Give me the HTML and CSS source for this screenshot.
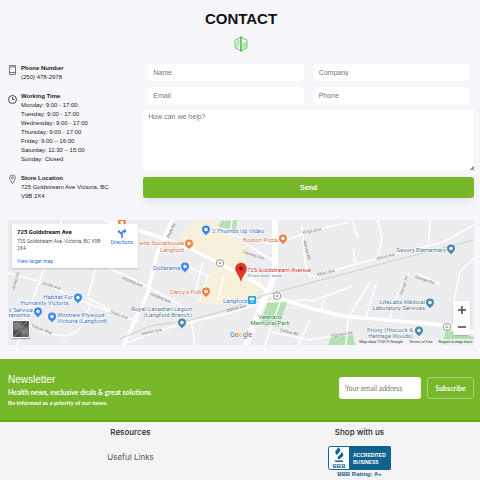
FILE: index.html
```html
<!DOCTYPE html>
<html lang="en">
<head>
    <meta charset="utf-8">
    <meta name="viewport" content="width=device-width, initial-scale=1">
    <title>Contact</title>
    <link rel="stylesheet" href="styles.css">
</head>
<body>
    <main>
        <header class="title">
            <h1>CONTACT</h1>
            <svg class="logo" viewBox="0 0 14 16" aria-hidden="true">
                <path d="M7 1 L13 4.300 V11.700 L7 15 L1 11.700 V4.300 Z"/>
                <path class="logo-bar" d="M7 0.500 V15.500"/>
                <path class="logo-thin" d="M3 12.500 V5.500 L5 4.300 V8.500 L3 9.500 M9 12.500 V8 L11 6.800 V12 M9 10 L11 9 M12 5.500 V11"/>
            </svg>
        </header>

        <section class="contact">
            <div class="details">
                <div class="detail">
                    <svg class="detail-icon" viewBox="0 0 9 12"><path d="M1.500 1.500 H7.500 V10.500 H1.500 Z M1.500 3 H7.500 M1.500 8.500 H7.500"/></svg>
                    <div>
                        <h2>Phone Number</h2>
                        <p>(250) 478-2978</p>
                    </div>
                </div>
                <div class="detail">
                    <svg class="detail-icon dark" viewBox="0 0 9 12"><circle cx="4.500" cy="7.500" r="4"/><path d="M4.500 5 V7.500 H6.500"/></svg>
                    <div>
                        <h2>Working Time</h2>
                        <p>Monday: 9:00 - 17:00</p>
                        <p>Tuesday: 9:00 - 17:00</p>
                        <p>Wednesday: 9:00 - 17:00</p>
                        <p>Thursday: 9:00 - 17:00</p>
                        <p>Friday: 9:00 – 16:00</p>
                        <p>Saturday: 11:30 – 15:00</p>
                        <p>Sunday: Closed</p>
                    </div>
                </div>
                <div class="detail">
                    <svg class="detail-icon" viewBox="0 0 9 12"><path d="M4.500 9.500 C3.500 7.500 1.700 6 1.700 3.800 A2.800 2.800 0 0 1 7.300 3.800 C7.300 6 5.500 7.500 4.500 9.500 Z"/><circle cx="4.500" cy="3.800" r="1"/></svg>
                    <div>
                        <h2>Store Location</h2>
                        <p>725 Goldstream Ave Victoria, BC V9B 2X4</p>
                    </div>
                </div>
            </div>

            <form class="contact-form">
                <div class="fields">
                    <input type="text" placeholder="Name" aria-label="Name">
                    <input type="text" placeholder="Company" aria-label="Company">
                    <input type="email" placeholder="Email" aria-label="Email">
                    <input type="tel" placeholder="Phone" aria-label="Phone">
                </div>
                <textarea placeholder="How can we help?" aria-label="How can we help?"></textarea>
                <button type="submit" class="send">Send</button>
            </form>
        </section>

        <section class="map">
            <svg class="map-canvas" viewBox="8 220 466 125" preserveAspectRatio="xMidYMid slice" role="img" aria-label="Map of 725 Goldstream Avenue">
                <defs>
                    <g id="pin">
                        <path d="M0 5.500 C-1 3.500 -4 2.500 -4 -0.500 A4 4 0 0 1 4 -0.500 C4 2.500 1 3.500 0 5.500 Z"/>
                        <circle cy="-0.500" r="1.700" fill="#fff"/>
                    </g>
                    <g id="shield">
                        <rect x="-3.500" y="-3" width="7" height="6" rx="2" fill="#fff" stroke="#777" stroke-width="0.700"/>
                        <path d="M-1.500 0 H1.500" stroke="#666" stroke-width="1"/>
                    </g>
                </defs>
                <rect x="0" y="200" width="490" height="160" fill="#ededef"/>

                <!-- town centre and parks -->
                <path fill="#f7f1dc" d="M178 240 L192 222 L210 219 L227 234 L246 246 L246 262 L263 282 L258 294 L240 299 L218 305 L196 303 L206 282 L216 264 L194 252 Z"/>
                <g fill="#b5e0b4">
                    <path d="M221 221 L237 220 L236 230 L219 227 Z"/>
                    <path d="M268 301 L287 302 L279 327 L260 325 Z"/>
                    <path d="M331 337 L353 335 L355 345 L328 345 Z"/>
                    <path d="M446 330 L474 337 V345 H442 Z"/>
                </g>

                <!-- side streets -->
                <g fill="none" stroke="#fff" stroke-width="1.500">
                    <path d="M62 220 L43 271 L17 345 M8 273 L45 283 L73 298 L138 322 M100 264 L135 280 L172 300 L190 312"/>
                    <path d="M92 300 L84 322 Q78 334 66 336 Q52 336 30 326 L8 318 M96 268 L88 296 M88 298 L110 310"/>
                    <path d="M152 332 L200 320 L233 312 L265 302 L310 300 M123 344 L150 334 M190 312 L195 345"/>
                    <path d="M310 277 L350 266 L390 255 L443 242 L474 225 M232 220 L230 235 L275 245 L310 231 L350 222"/>
                    <path d="M182 264 L208 276 L200 300 M203 262 L196 290 M224 276 L218 300 M240 240 L275 262"/>
                    <path d="M302 225 L305 262 L310 277 M352 220 L358 239 M378 220 L382 238 L378 255 M430 220 L429 243 M353 248 L356 265"/>
                    <path d="M310 302 L352 286 M324 300 L320 312 M370 282 L348 318 L346 345 M376 284 L366 318 M410 272 L394 302 L390 319 M418 274 L440 284"/>
                    <path d="M280 302 L265 345 M272 332 L310 340 L350 333 M310 320 L298 345 M474 258 L460 272 L454 300"/>
                </g>
                <g fill="none" stroke="#fff" stroke-width="3.500">
                    <path d="M105 220 L150 234 L193 250 L217 262 L260 285 L272 296 L310 308 L343 316 L443 325 L474 332"/>
                    <path d="M173 218 L157 254 L147 295 L123 346"/>
                </g>
                <path fill="none" stroke="#fff" stroke-width="6" d="M275 218 L275 268 Q273 284 265 297 L245 346"/>
                <path fill="none" stroke="#c0d8c6" stroke-width="1" d="M120 339 L150 326 L190 320 L230 309 L265 295 L310 283 L400 259 L474 240"/>

                <g class="street">
                    <text transform="translate(169 238) rotate(-65)">Peatt Rd</text>
                    <text transform="translate(14 290) rotate(-72)">Jacklin Rd</text>
                    <text transform="translate(42 284) rotate(18)">Goldie Ave</text>
                    <text transform="translate(110 313) rotate(20)">Orono Ave</text>
                    <text transform="translate(122 279) rotate(22)">Hockley Ave</text>
                    <text transform="translate(150 295) rotate(22)">Hockley Ave</text>
                    <text transform="translate(31 327) rotate(20)">Trillium Way</text>
                    <text transform="translate(142 335) rotate(-12)">Station Ave</text>
                    <text transform="translate(227 312) rotate(-14)">Station Ave</text>
                    <text transform="translate(243 253) rotate(18)">Fairway Ave</text>
                    <text transform="translate(303 234) rotate(-12)">Kings Blvd</text>
                    <text transform="translate(303 241) rotate(75)">Winster Rd</text>
                    <text transform="translate(317 276) rotate(-13)">Albert Ave</text>
                    <text transform="translate(377 260) rotate(-14)">Atkins Ave</text>
                    <text transform="translate(402 295) rotate(-72)">Granger Rd</text>
                    <text transform="translate(415 278) rotate(18)">Granger Rd</text>
                    <text transform="translate(280 331) rotate(15)">Carlow Rd</text>
                    <text transform="translate(331 337) rotate(-8)">Highland Rd</text>
                </g>

                <use href="#shield" x="220" y="263"/>
                <use href="#shield" x="277" y="296"/>
                <use href="#shield" x="447" y="327"/>

                <g class="place shop">
                    <text x="212" y="233">2 Thumbs Up Video</text>
                    <text x="153" y="270">Dollarama</text>
                    <text x="73" y="299" text-anchor="end">Habitat For</text>
                    <text x="73" y="305" text-anchor="end">Humanity Victoria...</text>
                    <text x="33" y="312" text-anchor="end">V Service</text>
                    <text x="33" y="317" text-anchor="end">Transmis..</text>
                    <text x="57" y="317">Windrew Plywood</text>
                    <text x="57" y="323">Victoria (Langford)</text>
                    <text x="223" y="303">Langford</text>
                </g>
                <g fill="#3b87ee">
                    <use href="#pin" x="206" y="230"/>
                    <use href="#pin" x="185" y="267"/>
                    <use href="#pin" x="78" y="298"/>
                    <use href="#pin" x="38" y="312"/>
                    <use href="#pin" x="52" y="317"/>
                </g>
                <g class="place food">
                    <text x="139" y="245">wns Socialhouse</text>
                    <text x="184" y="252" text-anchor="end">Langford</text>
                    <text x="243" y="242">Boston Pizza</text>
                    <text x="170" y="294">Darcy's Pub</text>
                </g>
                <g fill="#f08344">
                    <use href="#pin" x="122" y="223"/>
                    <use href="#pin" x="189" y="244"/>
                    <use href="#pin" x="283" y="239"/>
                    <use href="#pin" x="206" y="292"/>
                </g>
                <g class="place civic">
                    <text x="446" y="252" text-anchor="end">Savory Elementary</text>
                    <text x="425" y="304" text-anchor="end">LifeLabs Medical</text>
                    <text x="425" y="310" text-anchor="end">Laboratory Services</text>
                    <text x="413" y="332" text-anchor="end">Priory (Hiscock &amp;</text>
                    <text x="413" y="338" text-anchor="end">Heritage Woods)</text>
                    <text x="192" y="311" text-anchor="end">Royal Canadian Legion</text>
                    <text x="192" y="317" text-anchor="end">(Langford Branch)</text>
                </g>
                <g fill="#4c8ba8">
                    <use href="#pin" x="451" y="249"/>
                    <use href="#pin" x="430" y="303"/>
                    <use href="#pin" x="419" y="331"/>
                    <use href="#pin" x="182" y="323"/>
                </g>
                <g class="place park">
                    <text x="270" y="319" text-anchor="middle">Veterans</text>
                    <text x="270" y="325" text-anchor="middle">Memorial Park</text>
                </g>

                <!-- train station -->
                <rect x="248" y="296" width="8" height="8" rx="1" fill="#27a5dd"/>
                <path d="M250 298 H254 V300 H250 Z M250 302 H254" fill="#fff" stroke="#fff" stroke-width="0.600"/>

                <!-- the store -->
                <path d="M241 281 C239.500 275 235.500 273 235.500 268.500 A5.500 5.500 0 0 1 246.500 268.500 C246.500 273 242.500 275 241 281 Z" fill="#e6352d" stroke="#b8201c" stroke-width="0.500"/>
                <circle cx="241" cy="268.500" r="2" fill="#7d1511"/>
                <text class="place store" x="247" y="272">725 Goldstream Avenue</text>
                <text class="place drive" x="247" y="277">20 min drive - home</text>

                <text class="google" x="230" y="337"><tspan fill="#4285f4">G</tspan><tspan fill="#ea4335">o</tspan><tspan fill="#fbbc05">o</tspan><tspan fill="#4285f4">g</tspan><tspan fill="#34a853">l</tspan><tspan fill="#ea4335">e</tspan></text>
            </svg>

            <div class="place-card">
                <div class="place-info">
                    <h3>725 Goldstream Ave</h3>
                    <p>725 Goldstream Ave, Victoria, BC V9B 2X4</p>
                    <a href="#">View larger map</a>
                </div>
                <a href="#" class="directions">
                    <svg viewBox="0 0 10 10" aria-hidden="true"><path d="M5 10 V6.500 L2 3.500 M5 6.500 V5 Q5 3 8 3"/><path class="tips" d="M7 0.500 L9.500 3 L7 5.500 Z M1 5 V2.500 H3.500 Z"/></svg>
                    Directions
                </a>
            </div>
            <button type="button" class="satellite" aria-label="Satellite view">
                <svg viewBox="0 0 16 16"><path fill="#66686a" d="M0 0 H16 V16 H0 Z"/><path fill="#85807c" d="M0 3 L6 1 L9 6 L2 9 Z M8 9 L14 7 L16 12 L10 14 Z"/><path fill="#4a5052" d="M9 0 L16 1 L14 6 L10 5 Z M0 10 L6 9 L8 16 H0 Z"/><path stroke="#8f8a86" d="M1 16 L14 0" fill="none"/></svg>
            </button>
            <div class="zoom">
                <button type="button" aria-label="Zoom in"><svg viewBox="0 0 8 8"><path d="M0 4 H8 M4 0 V8"/></svg></button>
                <button type="button" aria-label="Zoom out"><svg viewBox="0 0 8 8"><path d="M0 4 H8"/></svg></button>
            </div>
            <div class="map-credits">
                <span>Map data ©2019 Google</span>
                <a href="#">Terms of Use</a>
                <a href="#">Report a map error</a>
            </div>
        </section>
    </main>

    <section class="newsletter">
        <div class="newsletter-text">
            <h2>Newsletter</h2>
            <p class="lead">Health news, exclusive deals &amp; great solutions</p>
            <p>Be informed as a priority of our news.</p>
        </div>
        <form class="subscribe">
            <input type="email" placeholder="Your email address" aria-label="Your email address">
            <button type="submit">Subscribe</button>
        </form>
    </section>

    <footer class="footer">
        <div class="footer-col">
            <h4>Resources</h4>
            <a href="#" class="links">Useful Links</a>
        </div>
        <div class="footer-col">
            <h4>Shop with us</h4>
            <a href="#" class="bbb">
                <svg viewBox="0 0 63 24" role="img" aria-label="BBB Accredited Business">
                    <rect x="0.500" y="0.500" width="62" height="23" rx="2" fill="#fff" stroke="#10638f"/>
                    <path d="M21 0 H61 Q63 0 63 2 V22 Q63 24 61 24 H21 Z" fill="#10638f"/>
                    <path d="M10 1 Q13.500 3.500 11.500 6 L9 9 Q6 6.500 8 4.500 Q10 3 10 1 Z M13.500 6 Q17 9 14 11 L11 13.500 Q8.500 12 10.500 10 Q13.500 8.500 13.500 6 Z M6.500 14.500 H15.500 L14.500 16 H7.500 Z" fill="#10638f"/>
                    <text x="4.500" y="22" class="bbb-name">BBB</text>
                    <text x="25" y="11" class="bbb-label">ACCREDITED</text>
                    <text x="25" y="18" class="bbb-label">BUSINESS</text>
                </svg>
                <span>BBB Rating: A+</span>
            </a>
        </div>
    </footer>
</body>
</html>
```

FILE: styles.css
```css
* {
    box-sizing: border-box;
}
body {
    margin: 0;
    background: #f4f4f4;
    color: #222;
    font-family: "Liberation Sans", Arial, sans-serif;
    font-size: 6px;
    line-height: 9px;
}
h1, h2, h3, h4, p {
    margin: 0;
}
a {
    color: inherit;
    text-decoration: none;
}
input, textarea, button {
    font-family: inherit;
    border: none;
    margin: 0;
}
main {
    background: #f7f7fb;
    padding: 10px 6px 12px 8px;
    border-bottom: 2px solid #fff;
}

.title {
    display: flex;
    flex-direction: column;
    align-items: center;
    gap: 9px;
}
.title h1 {
    font-size: 15px;
    line-height: 17px;
    color: #111;
}
.logo {
    width: 14px;
    height: 16px;
    fill: none;
    stroke: #5fcb62;
    stroke-width: 1;
}
.logo-bar {
    stroke: #3dbb43;
    stroke-width: 1.5;
}
.logo-thin {
    stroke: #8fdc90;
}

.contact {
    display: grid;
    grid-template-columns: 2fr 5fr;
    gap: 3px;
    margin-top: 12px;
}
.details {
    display: flex;
    flex-direction: column;
    gap: 10px;
}
.detail {
    display: flex;
    align-items: flex-start;
    gap: 4px;
    padding-right: 28px;
}
.detail h2 {
    font-size: 6px;
    line-height: 9px;
}
.detail-icon {
    width: 9px;
    height: 12px;
    flex: none;
    fill: none;
    stroke: #777;
    stroke-width: 1;
}
.detail-icon.dark {
    stroke: #444;
}

.contact-form {
    display: flex;
    flex-direction: column;
}
.fields {
    display: grid;
    grid-template-columns: 1fr 1fr;
    gap: 6px 10px;
    padding: 0 5px;
    margin-bottom: 6px;
}
.fields input, .contact-form textarea {
    width: 100%;
    min-width: 0;
    background: #fff;
    border-radius: 3px;
    font-size: 7px;
    color: #333;
}
.fields input {
    height: 17px;
    padding: 0 5px;
}
.contact-form textarea {
    height: 60px;
    padding: 3px 5px;
    line-height: 8px;
}
.contact-form textarea::-webkit-resizer {
    background: linear-gradient(135deg, transparent 85%, #999 85%);
}
::placeholder {
    color: #777;
    opacity: 1;
}
.send {
    height: 21px;
    margin-top: 7px;
    border-radius: 3px;
    background: #76b82a;
    color: #fff;
    font-size: 7px;
    font-weight: bold;
    box-shadow: 0 4px 8px rgba(80, 80, 160, 0.12);
}

.map {
    position: relative;
    margin-top: 19px;
    font-family: Roboto, sans-serif;
}
.map-canvas {
    display: block;
    width: 100%;
    height: 125px;
}
.place {
    font-size: 6px;
    stroke: #fff;
    stroke-width: 1px;
    paint-order: stroke;
}
.shop { fill: #3f73c0; }
.food { fill: #d9713c; }
.civic { fill: #55788c; }
.park { fill: #2f7d46; }
.store { fill: #d02f2b; }
.drive {
    fill: #3f73c0;
    font-size: 4px;
}
.street {
    font-size: 4px;
    fill: #777;
}
.google {
    font-size: 7px;
    font-weight: 500;
    stroke: #fff;
    stroke-width: 1px;
    paint-order: stroke;
}
.place-card {
    position: absolute;
    top: 4px;
    left: 4px;
    width: 126px;
    height: 44px;
    padding: 4px 5px;
    display: flex;
    justify-content: space-between;
    background: #fff;
    border-radius: 1px;
    box-shadow: 0 1px 2px rgba(0, 0, 0, 0.2);
    font-size: 5px;
    line-height: 7px;
    color: #555;
}
.place-info {
    width: 88px;
}
.place-info h3 {
    font-size: 6px;
    line-height: 8px;
    color: #111;
    margin-bottom: 2px;
}
.place-info a {
    display: block;
    margin-top: 6px;
}
.place-card a {
    color: #2b6fe0;
}
.directions {
    display: flex;
    flex-direction: column;
    align-items: center;
    gap: 1px;
}
.directions svg {
    width: 10px;
    height: 10px;
    fill: none;
    stroke: #2b7bf0;
    stroke-width: 1.5;
}
.directions .tips {
    fill: #2b7bf0;
    stroke: none;
}
.satellite {
    position: absolute;
    left: 4px;
    bottom: 7px;
    width: 18px;
    height: 18px;
    padding: 1px;
    background: #fff;
    box-shadow: 0 1px 1px rgba(0, 0, 0, 0.3);
}
.satellite svg {
    display: block;
    width: 100%;
}
.zoom {
    position: absolute;
    right: 4px;
    bottom: 10px;
    width: 17px;
    display: flex;
    flex-direction: column;
    background: #fff;
    border-radius: 1px;
    box-shadow: 0 1px 2px rgba(0, 0, 0, 0.2);
}
.zoom button {
    display: flex;
    align-items: center;
    justify-content: center;
    height: 17px;
    padding: 0;
    background: none;
}
.zoom svg {
    width: 8px;
    height: 8px;
    stroke: #444;
    stroke-width: 1.5;
}
.map-credits {
    position: absolute;
    right: 0;
    bottom: 0;
    display: flex;
    gap: 6px;
    padding: 0 2px;
    background: rgba(245, 245, 245, 0.7);
    font-size: 4px;
    line-height: 6px;
    color: #333;
}

.newsletter {
    display: flex;
    justify-content: space-between;
    align-items: flex-start;
    padding: 14px 6px 12px 8px;
    background: #76b82a;
    border-bottom: 2px solid #64ae14;
    color: #fff;
    font-family: Lato, sans-serif;
}
.newsletter h2 {
    font-family: "Liberation Sans", Arial, sans-serif;
    font-size: 10px;
    line-height: 13px;
    font-weight: normal;
}
.newsletter p {
    font-weight: bold;
    line-height: 10px;
}
.newsletter .lead {
    font-size: 7px;
    line-height: 12px;
}
.subscribe {
    display: flex;
    gap: 6px;
    margin-top: 4px;
}
.subscribe input, .subscribe button {
    height: 22px;
    border-radius: 3px;
    font-size: 7px;
}
.subscribe input {
    width: 82px;
    padding: 0 6px;
    background: #fff;
}
.subscribe button {
    width: 47px;
    padding: 0;
    background: none;
    border: 1px solid #a9d47a;
    color: #fff;
    font-weight: bold;
}

.footer {
    display: grid;
    grid-template-columns: 1fr 1fr;
    padding: 5px 6px 0 16px;
    font-family: Inter, sans-serif;
    font-size: 8px;
    text-align: center;
}
.footer-col {
    display: flex;
    flex-direction: column;
    align-items: center;
}
.footer h4 {
    font-size: 8px;
    line-height: 10px;
    font-weight: 500;
}
.links {
    margin-top: 15px;
    line-height: 10px;
    color: #555;
}
.bbb {
    display: flex;
    flex-direction: column;
    align-items: center;
    margin-top: 9px;
    color: #10638f;
    font-family: "Liberation Sans", Arial, sans-serif;
    font-size: 6px;
    font-weight: bold;
    line-height: 8px;
}
.bbb svg {
    width: 63px;
    height: 24px;
}
.bbb-name {
    font-size: 6px;
    fill: #10638f;
}
.bbb-label {
    font-size: 5px;
    fill: #fff;
}
```
